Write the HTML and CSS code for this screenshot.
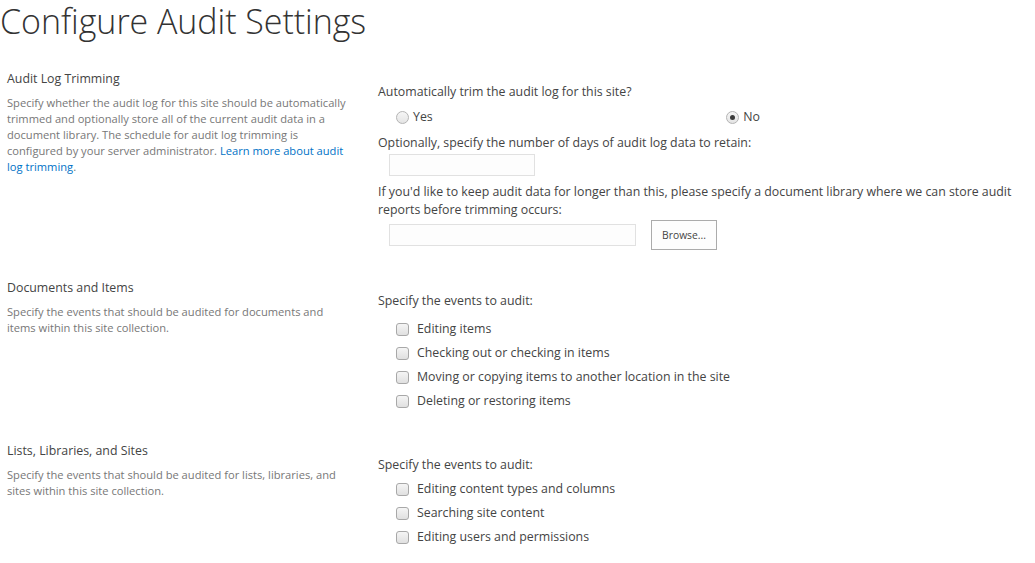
FILE: index.html
```html
<!DOCTYPE html>
<html lang="en">
<head>
<meta charset="utf-8">
<title>Configure Audit Settings</title>
<link rel="stylesheet" href="styles.css">
</head>
<body>
<h1 class="page-title">Configure Audit Settings</h1>
<div class="settings">
  <section class="setting">
    <div class="setting-info">
      <h2 class="setting-title">Audit Log Trimming</h2>
      <p class="setting-desc">Specify whether the audit log for this site should be automatically<br>trimmed and optionally store all of the current audit data in a<br>document library. The schedule for audit log trimming is<br>configured by your server administrator. <a href="#" class="link">Learn more about audit<br>log trimming</a>.</p>
    </div>
    <div class="setting-controls">
      <div class="field-label">Automatically trim the audit log for this site?</div>
      <div class="radio-row">
        <label class="choice"><input type="radio" name="trim" class="radio"><span>Yes</span></label>
        <label class="choice"><input type="radio" name="trim" class="radio" checked><span>No</span></label>
      </div>
      <div class="field-label spaced">Optionally, specify the number of days of audit log data to retain:</div>
      <input type="text" class="text-input days-input">
      <div class="field-label spaced-lg">If you'd like to keep audit data for longer than this, please specify a document library where we can store audit<br>reports before trimming occurs:</div>
      <div class="browse-row">
        <input type="text" class="text-input library-input">
        <button type="button" class="browse-btn">Browse...</button>
      </div>
    </div>
  </section>

  <section class="setting">
    <div class="setting-info">
      <h2 class="setting-title">Documents and Items</h2>
      <p class="setting-desc">Specify the events that should be audited for documents and<br>items within this site collection.</p>
    </div>
    <div class="setting-controls">
      <div class="field-label">Specify the events to audit:</div>
      <ul class="check-list">
        <li><label class="choice"><input type="checkbox" class="check"><span>Editing items</span></label></li>
        <li><label class="choice"><input type="checkbox" class="check"><span>Checking out or checking in items</span></label></li>
        <li><label class="choice"><input type="checkbox" class="check"><span>Moving or copying items to another location in the site</span></label></li>
        <li><label class="choice"><input type="checkbox" class="check"><span>Deleting or restoring items</span></label></li>
      </ul>
    </div>
  </section>

  <section class="setting">
    <div class="setting-info">
      <h2 class="setting-title">Lists, Libraries, and Sites</h2>
      <p class="setting-desc">Specify the events that should be audited for lists, libraries, and<br>sites within this site collection.</p>
    </div>
    <div class="setting-controls setting-controls-low">
      <div class="field-label">Specify the events to audit:</div>
      <ul class="check-list check-list-tight">
        <li><label class="choice"><input type="checkbox" class="check"><span>Editing content types and columns</span></label></li>
        <li><label class="choice"><input type="checkbox" class="check"><span>Searching site content</span></label></li>
        <li><label class="choice"><input type="checkbox" class="check"><span>Editing users and permissions</span></label></li>
      </ul>
    </div>
  </section>
</div>
</body>
</html>
```

FILE: styles.css
```css
html, body {
  margin: 0;
  padding: 0;
  background: #ffffff;
}

body {
  font-family: "Open Sans", "Noto Sans", sans-serif;
  color: #444444;
  overflow: hidden;
}

.page-title {
  margin: 1px 0 0 0;
  padding-left: 0;
  font-size: 34px;
  font-weight: 300;
  line-height: 40px;
  color: #333333;
  letter-spacing: -0.05px;
}

.settings {
  margin-top: 30px;
  display: flex;
  flex-direction: column;
  gap: 30px;
}

.setting {
  display: grid;
  grid-template-columns: 378px 1fr;
}

.setting-info {
  padding-left: 7px;
}

.setting-title {
  margin: 0;
  font-size: 12.35px;
  font-weight: 400;
  line-height: 16px;
  color: #444444;
}

.setting-desc {
  margin: 8px 0 0 0;
  font-size: 11.15px;
  line-height: 16px;
  color: #777777;
}

.link {
  color: #0072c6;
  text-decoration: none;
}

.setting-controls {
  padding-top: 12px;
  font-size: 12.35px;
  line-height: 18px;
  color: #444444;
}

.setting-controls-low {
  padding-top: 13px;
}

.field-label {
  white-space: nowrap;
}

.field-label.spaced {
  margin-top: 8px;
}

.field-label.spaced-lg {
  margin-top: 7px;
}

.radio-row {
  margin-top: 7px;
  width: 364px;
  padding-left: 18px;
  height: 18px;
  display: flex;
  justify-content: space-between;
  align-items: center;
}

.choice {
  display: inline-flex;
  align-items: center;
  gap: 4px;
}

.radio {
  appearance: none;
  -webkit-appearance: none;
  margin: 0;
  width: 13px;
  height: 13px;
  border-radius: 50%;
  border: 1px solid #b4b4b4;
  background: linear-gradient(#f6f6f6, #e4e4e4);
  box-sizing: border-box;
  position: relative;
}

.radio:checked::after {
  content: "";
  position: absolute;
  left: 3px;
  top: 3px;
  width: 5px;
  height: 5px;
  border-radius: 50%;
  background: #3c3c3c;
}

.text-input {
  display: block;
  box-sizing: border-box;
  height: 22px;
  border: 1px solid #e1e1e1;
  background: #fdfdfd;
  margin: 0;
  padding: 0 4px;
  font: inherit;
}

.days-input {
  margin-top: 2px;
  margin-left: 11px;
  width: 146px;
}

.browse-row {
  margin-top: 1px;
  margin-left: 11px;
  display: flex;
  align-items: center;
  gap: 15px;
}

.library-input {
  width: 247px;
}

.browse-btn {
  box-sizing: border-box;
  width: 66px;
  height: 30px;
  border: 1px solid #ababab;
  background: #fdfdfd;
  font-family: inherit;
  font-size: 10.3px;
  color: #444444;
  padding: 0;
  margin: 0;
}

.check-list {
  list-style: none;
  margin: 7px 0 0 0;
  padding: 0 0 0 18px;
}

.check-list-tight {
  margin-top: 3px;
}

.check-list li {
  height: 24px;
  display: flex;
  align-items: center;
}

.check-list .choice {
  gap: 8px;
}

.check {
  appearance: none;
  -webkit-appearance: none;
  margin: 0;
  width: 13px;
  height: 13px;
  border-radius: 3px;
  border: 1px solid #a8a8a8;
  background: linear-gradient(#f5f5f5, #e0e0e0);
  box-sizing: border-box;
}
```
